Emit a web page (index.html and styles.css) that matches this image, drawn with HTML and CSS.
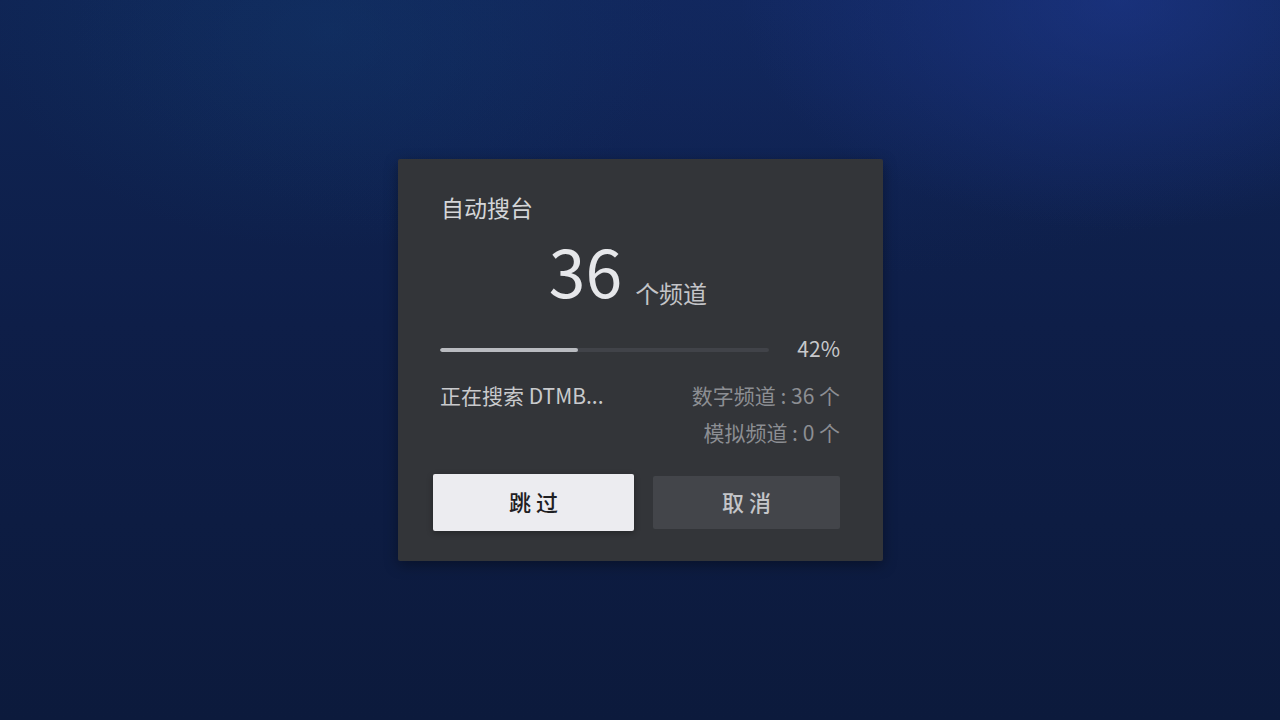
FILE: index.html
```html
<!DOCTYPE html>
<html lang="zh-CN">
<head>
<meta charset="utf-8">
<title>自动搜台</title>
<link rel="stylesheet" href="styles.css">
</head>
<body>
<div class="screen">
  <div class="dialog">
    <div class="title">自动搜台</div>
    <div class="count-row">
      <span class="count">36</span>
      <span class="count-unit">个频道</span>
    </div>
    <div class="progress-row">
      <div class="track"><div class="fill" style="width:42%"></div></div>
      <span class="percent">42%</span>
    </div>
    <div class="status-row">
      <div class="status">正在搜索 DTMB...</div>
      <div class="stats">
        <div class="stat">数字频道 : 36 个</div>
        <div class="stat">模拟频道 : 0 个</div>
      </div>
    </div>
    <div class="btn-row">
      <div class="btn btn-skip">跳过</div>
      <div class="btn btn-cancel">取消</div>
    </div>
  </div>
</div>
</body>
</html>
```

FILE: styles.css
```css
* { box-sizing: border-box; }
html, body { margin: 0; padding: 0; }
body {
  width: 1280px;
  height: 720px;
  overflow: hidden;
  font-family: "Noto Sans CJK SC", "Noto Sans", sans-serif;
}
.screen {
  width: 1280px;
  height: 720px;
  display: flex;
  justify-content: center;
  align-items: flex-start;
  padding-top: 159px;
  padding-left: 1px;
  background:
    radial-gradient(ellipse 380px 230px at 1120px 0px, rgba(32, 58, 150, 0.55), rgba(32, 58, 150, 0) 100%),
    radial-gradient(ellipse 340px 220px at 330px 30px, rgba(18, 60, 110, 0.35), rgba(18, 60, 110, 0) 100%),
    radial-gradient(ellipse 700px 280px at 760px 0px, rgba(22, 44, 110, 0.4), rgba(22, 44, 110, 0) 100%),
    linear-gradient(180deg, #0f2555 0%, #0e1e48 45%, #0c1a3c 100%);
}
.dialog {
  width: 485px;
  height: 402px;
  background: #333539;
  border-radius: 2px;
  box-shadow: 0 4px 14px rgba(0, 0, 0, 0.35);
  padding: 33px 43px 30px 44px;
  display: flex;
  flex-direction: column;
}
.title {
  font-size: 23px;
  line-height: 30px;
  color: #d4d5d8;
  margin-left: -1px;
}
.count-row {
  margin-top: 12px;
  height: 70px;
  display: flex;
  justify-content: center;
  align-items: baseline;
  padding-right: 26px;
  gap: 13px;
}
.count {
  font-size: 66px;
  line-height: 70px;
  color: #e6e7ea;
  font-weight: 400;
}
.count-unit {
  font-size: 24px;
  color: #c3c4c8;
  position: relative;
  top: 5px;
}
.progress-row {
  margin-top: 29px;
  height: 30px;
  display: flex;
  align-items: center;
  justify-content: space-between;
}
.track {
  width: 329px;
  height: 4px;
  margin-left: -2px;
  margin-top: 3px;
  border-radius: 2px;
  background: #414349;
  overflow: hidden;
}
.fill {
  height: 100%;
  border-radius: 2px;
  background: #b9bbc0;
}
.percent {
  font-size: 21px;
  color: #c8c9cc;
}
.status-row {
  margin-top: 14px;
  display: flex;
  justify-content: space-between;
  align-items: flex-start;
}
.status {
  font-size: 21px;
  line-height: 37px;
  color: #c9cacd;
  margin-left: -2px;
}
.stats {
  text-align: right;
}
.stat {
  font-size: 21px;
  line-height: 37px;
  color: #8c8e93;
}
.btn-row {
  margin-top: 23px;
  margin-left: -9px;
  display: flex;
  align-items: center;
  gap: 19px;
}
.btn {
  display: flex;
  justify-content: center;
  align-items: center;
  padding-bottom: 4px;
  font-size: 22px;
  letter-spacing: 5px;
  text-indent: 5px;
  font-weight: 500;
  border-radius: 2px;
}
.btn-skip {
  width: 201px;
  height: 57px;
  background: #ececf0;
  color: #1f2023;
  box-shadow: 0 2px 6px rgba(0, 0, 0, 0.3);
}
.btn-cancel {
  width: 187px;
  height: 53px;
  background: #43454a;
  color: #c4c5c9;
}
```
